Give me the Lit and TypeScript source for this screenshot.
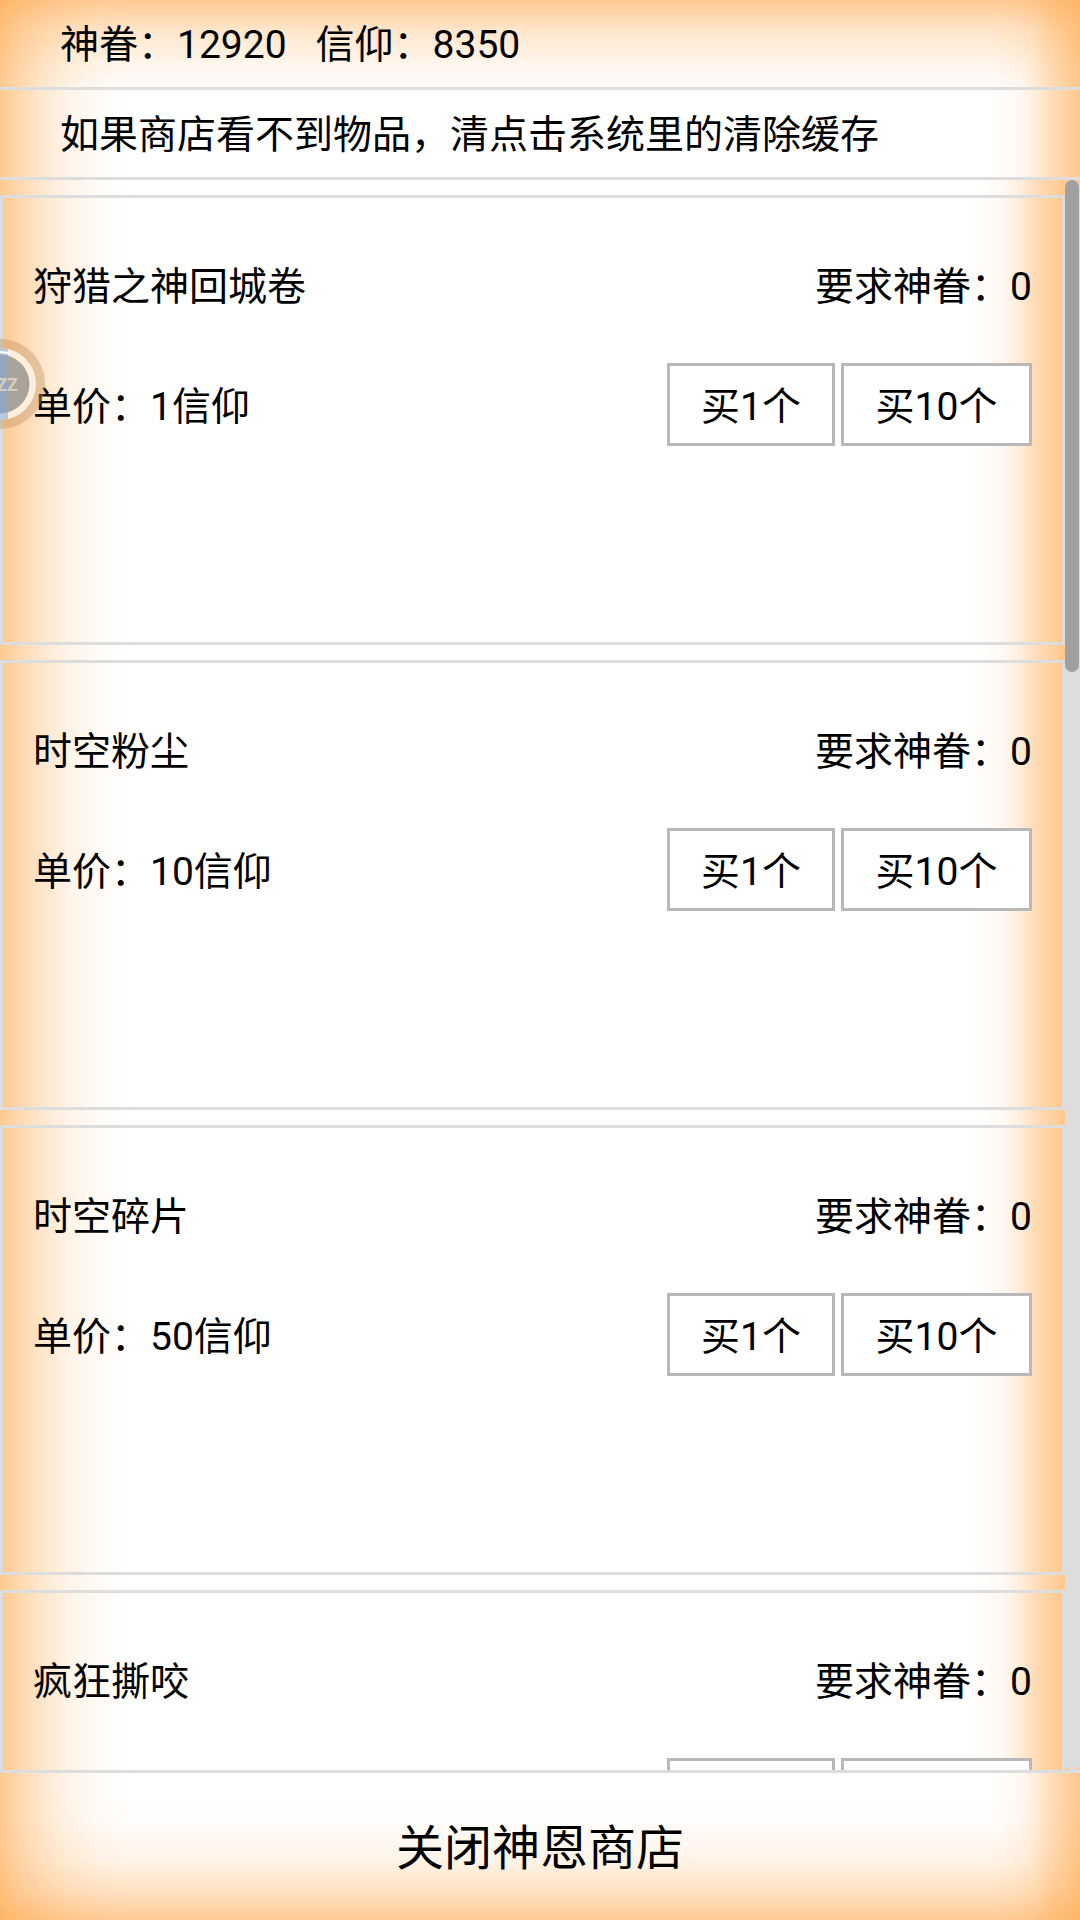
import { LitElement, html, css, svg } from "lit";
import { customElement } from "lit/decorators.js";

const ITEMS = [
  { name: "狩猎之神回城卷", price: "单价：1信仰", b1: "买1个", b2: "买10个" },
  { name: "时空粉尘", price: "单价：10信仰", b1: "买1个", b2: "买10个" },
  { name: "时空碎片", price: "单价：50信仰", b1: "买1个", b2: "买10个" },
  { name: "疯狂撕咬", price: "", b1: "", b2: "" },
];

const ball = svg`
  <svg class="ball" width="46" height="92" viewBox="0 0 46 92">
    <defs><clipPath id="disc"><circle cx="0" cy="46" r="36"></circle></clipPath></defs>
    <circle cx="0" cy="46" r="45" fill="rgb(190,150,100)" fill-opacity="0.42"></circle>
    <circle cx="0" cy="46" r="36" fill="#ffefdc"></circle>
    <circle cx="0" cy="46" r="29.5" fill="#a8a49c"></circle>
    <rect x="0" y="8" width="8" height="76" fill="#7fa9dd" fill-opacity="0.55" clip-path="url(#disc)"></rect>
    <path d="M0 14 L10 15" stroke="#fff" stroke-width="2" fill="none"></path>
    <text class="zz" x="18" y="53" text-anchor="end">ZZ</text>
  </svg>
`;

@customElement("app-root")
export class AppRoot extends LitElement {
  static styles = css`
    :host {
      --o: 255, 170, 80;
      --left: linear-gradient(to right, rgba(var(--o), 0.64), rgba(var(--o), 0.44) 20px, rgba(var(--o), 0.29) 40px, rgba(var(--o), 0.13) 67px, rgba(var(--o), 0.04) 100px, rgba(var(--o), 0) 130px);
      --right: linear-gradient(to left, rgba(var(--o), 0.66), rgba(var(--o), 0.55) 12px, rgba(var(--o), 0.4) 29px, rgba(var(--o), 0.19) 45px, rgba(var(--o), 0.07) 62px, rgba(var(--o), 0) 90px);
      width: 1080px;
      height: 1920px;
      position: relative;
      overflow: hidden;
      background: #fff;
      color: #000;
      font-family: Roboto, "Noto Sans CJK SC", sans-serif;
      font-size: 39px;
      display: flex;
      flex-direction: column;
    }
    .top {
      flex: none;
      height: 90px;
      box-sizing: border-box;
      padding: 0 0 6px 60px;
      display: flex;
      align-items: center;
      white-space: pre;
      border-bottom: 3px solid #ddd;
      background: var(--left), var(--right), linear-gradient(to bottom, rgba(var(--o), 0.62), rgba(var(--o), 0.3) 30px, rgba(var(--o), 0.1) 65px, rgba(var(--o), 0) 92px);
    }
    .notice {
      background: var(--left), var(--right);
    }
    .middle {
      flex: 1;
      min-height: 0;
      display: flex;
    }
    .list {
      flex: 1;
      min-width: 0;
      overflow: hidden;
      background: var(--left), var(--right);
    }
    .card {
      height: 450px;
      box-sizing: border-box;
      margin-top: 15px;
      border: 3px solid #ddd;
      padding: 61px 30px 0;
      background: var(--left), var(--right), #fff;
      display: flex;
      flex-direction: column;
      gap: 48px;
    }
    .row {
      display: flex;
      justify-content: space-between;
      align-items: center;
      line-height: 56px;
    }
    .price {
      padding-top: 5px;
    }
    .buttons {
      display: flex;
      gap: 6px;
    }
    .btn {
      width: 168px;
      height: 83px;
      box-sizing: border-box;
      border: 3px solid #b8b8b8;
      padding-top: 5px;
      display: flex;
      align-items: center;
      justify-content: center;
      background: #fff;
    }
    .wide {
      width: 191px;
    }
    .rail {
      flex: none;
      width: 15px;
      background: #ffc88e;
    }
    .track {
      height: 100%;
      background: #ddd;
      border-radius: 7px;
    }
    .thumb {
      width: 14px;
      height: 492px;
      border-radius: 7px;
      background: #a0a0a0;
    }
    .footer {
      flex: none;
      height: 150px;
      box-sizing: border-box;
      padding-bottom: 5px;
      border-top: 3px solid #ddd;
      display: flex;
      align-items: center;
      justify-content: center;
      font-size: 48px;
      background: var(--left), var(--right), linear-gradient(to top, rgba(var(--o), 0.62), rgba(var(--o), 0.33) 30px, rgba(var(--o), 0.13) 60px, rgba(var(--o), 0.02) 100px, rgba(var(--o), 0) 130px);
    }
    .ball {
      position: absolute;
      left: 0;
      top: 338px;
      display: block;
    }
    .zz {
      font-family: Roboto, sans-serif;
      font-size: 18px;
      font-weight: 700;
      fill: #d6cfc0;
    }
  `;

  render() {
    return html`
      <div class="top">神眷：12920   信仰：8350</div>
      <div class="top notice">如果商店看不到物品，清点击系统里的清除缓存</div>
      <div class="middle">
        <div class="list">
          ${ITEMS.map(
            (it) => html`
              <div class="card">
                <div class="row"><span>${it.name}</span><span>要求神眷：0</span></div>
                <div class="row">
                  <span class="price">${it.price}</span>
                  <div class="buttons">
                    <div class="btn">${it.b1}</div>
                    <div class="btn wide">${it.b2}</div>
                  </div>
                </div>
              </div>
            `
          )}
        </div>
        <div class="rail"><div class="track"><div class="thumb"></div></div></div>
      </div>
      <div class="footer">关闭神恩商店</div>
      ${ball}
    `;
  }
}
